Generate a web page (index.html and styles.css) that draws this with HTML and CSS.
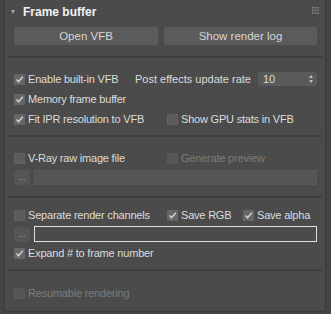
FILE: index.html
```html
<html lang="en">
  <head>
    <meta charset="UTF-8" />
    <title>Frame buffer</title>
    <link rel="stylesheet" href="styles.css">
  </head>
  <body>
    <div class="panel">
      <div class="rollout-head">
        <span class="arrow"></span>
        <span class="title">Frame buffer</span>
        <svg class="grip" width="7" height="7" viewBox="0 0 7 7">
          <g fill="#8c8c8c">
            <rect x="0" y="0" width="1.5" height="1.5" /><rect x="2.7" y="0" width="1.5" height="1.5" /><rect x="5.4" y="0" width="1.5" height="1.5" />
            <rect x="0" y="2.7" width="1.5" height="1.5" /><rect x="2.7" y="2.7" width="1.5" height="1.5" /><rect x="5.4" y="2.7" width="1.5" height="1.5" />
            <rect x="0" y="5.4" width="1.5" height="1.5" /><rect x="2.7" y="5.4" width="1.5" height="1.5" /><rect x="5.4" y="5.4" width="1.5" height="1.5" />
          </g>
        </svg>
      </div>

      <div class="section buttons">
        <div class="btn">Open VFB</div>
        <div class="btn">Show render log</div>
      </div>

      <div class="section vfb">
        <div class="row">
          <label class="check checked col-a">Enable built-in VFB</label>
          <span class="label">Post effects update rate</span>
          <div class="spinner"><span>10</span><span class="arrows"></span></div>
        </div>
        <div class="row">
          <label class="check checked">Memory frame buffer</label>
        </div>
        <div class="row">
          <label class="check checked col-b">Fit IPR resolution to VFB</label>
          <label class="check">Show GPU stats in VFB</label>
        </div>
      </div>

      <div class="section raw">
        <div class="row">
          <label class="check col-b">V-Ray raw image file</label>
          <label class="check disabled">Generate preview</label>
        </div>
        <div class="file-row">
          <div class="dots-btn">...</div>
          <div class="field disabled"></div>
        </div>
      </div>

      <div class="section channels">
        <div class="row">
          <label class="check col-b">Separate render channels</label>
          <label class="check checked col-c">Save RGB</label>
          <label class="check checked">Save alpha</label>
        </div>
        <div class="file-row">
          <div class="dots-btn">...</div>
          <div class="field"></div>
        </div>
        <div class="row">
          <label class="check checked">Expand # to frame number</label>
        </div>
      </div>

      <div class="section resume">
        <div class="row">
          <label class="check disabled">Resumable rendering</label>
        </div>
      </div>
    </div>
  </body>
</html>
```

FILE: styles.css
```css
body {
  margin: 0;
  background-color: #444444;
  font-family: "Liberation Sans", Arial, sans-serif;
  font-size: 11px;
  color: #dcdcdc;
}
.panel {
  margin-left: 4px;
  width: 320px;
  height: 311px;
  background-color: #4b4b4b;
  border: 1px solid #3a3a3a;
  border-top: none;
  border-radius: 0 0 3px 3px;
}
.rollout-head {
  display: flex;
  align-items: center;
  height: 24px;
  padding: 0 6px 0 6px;
}
.arrow {
  width: 0;
  height: 0;
  border-left: 2.5px solid transparent;
  border-right: 2.5px solid transparent;
  border-top: 4px solid #a6a6a6;
  margin-right: 8px;
  margin-top: -1px;
}
.title {
  font-weight: bold;
  font-size: 12px;
  color: #f2f2f2;
}
.grip {
  margin-left: auto;
  margin-top: -4px;
}
.section {
  margin: 0 3px;
  padding: 0 5px 0 6px;
  border-bottom: 2px solid #3e3e3e;
}
.buttons {
  display: grid;
  grid-template-columns: 144px 1fr;
  gap: 6px;
  padding-top: 3px;
  padding-bottom: 11px;
}
.btn {
  height: 18px;
  line-height: 18px;
  text-align: center;
  background-color: #5b5b5b;
  border-radius: 2px;
  color: #d6d6d6;
  font-size: 11.5px;
}
.vfb {
  padding-top: 11px;
  padding-bottom: 6px;
}
.raw {
  padding-top: 11px;
  padding-bottom: 10px;
}
.channels {
  padding-top: 7px;
  padding-bottom: 6px;
}
.resume {
  border-bottom: none;
  padding-top: 12px;
}
.row {
  display: flex;
  align-items: center;
  height: 20px;
}
.file-row {
  display: flex;
  align-items: center;
  gap: 4px;
  height: 16px;
  margin: 1px 0;
}
.check {
  display: flex;
  align-items: center;
  gap: 3px;
  white-space: nowrap;
  letter-spacing: -0.2px;
}
.check::before {
  content: "";
  box-sizing: border-box;
  width: 11px;
  height: 11px;
  background-color: #5c5c5c;
  border: 1px solid #626262;
  flex-shrink: 0;
}
.check.checked::before {
  background-color: #666666;
  border-color: #666666;
  background-image: url("data:image/svg+xml;utf8,<svg xmlns='http://www.w3.org/2000/svg' width='9' height='9' viewBox='0 0 9 9'><path d='M1.5 4.5 L3.5 6.8 L7.8 1.8' fill='none' stroke='%23cfcfcf' stroke-width='1.5'/></svg>");
  background-repeat: no-repeat;
  background-position: center;
}
.check.disabled {
  color: #7c7c7c;
}
.check.disabled::before {
  background-color: #555555;
  border-color: #595959;
}
.col-a {
  width: 121px;
}
.col-b {
  width: 153px;
}
.col-c {
  width: 76px;
}
.label {
  white-space: nowrap;
}
.spinner {
  margin-left: auto;
  display: flex;
  align-items: center;
  justify-content: space-between;
  box-sizing: border-box;
  width: 59px;
  height: 14px;
  padding: 0 4px 0 5px;
  background-color: #5a5a5a;
  border-radius: 2px;
}
.arrows {
  display: flex;
  flex-direction: column;
  gap: 2px;
}
.arrows::before,
.arrows::after {
  content: "";
  width: 0;
  height: 0;
  border-left: 2.5px solid transparent;
  border-right: 2.5px solid transparent;
}
.arrows::before {
  border-bottom: 3px solid #bdbdbd;
}
.arrows::after {
  border-top: 3px solid #bdbdbd;
}
.dots-btn {
  width: 16px;
  height: 15px;
  line-height: 13px;
  text-align: center;
  background-color: #555555;
  border-radius: 3px;
  color: #8a8a8a;
  font-size: 10px;
  letter-spacing: -0.5px;
}
.field {
  flex: 1;
  box-sizing: border-box;
  height: 16px;
  border: 1px solid #dedede;
  background-color: #4b4b4b;
}
.field.disabled {
  height: 15px;
  background-color: #555555;
  border-color: #595959;
}
```
